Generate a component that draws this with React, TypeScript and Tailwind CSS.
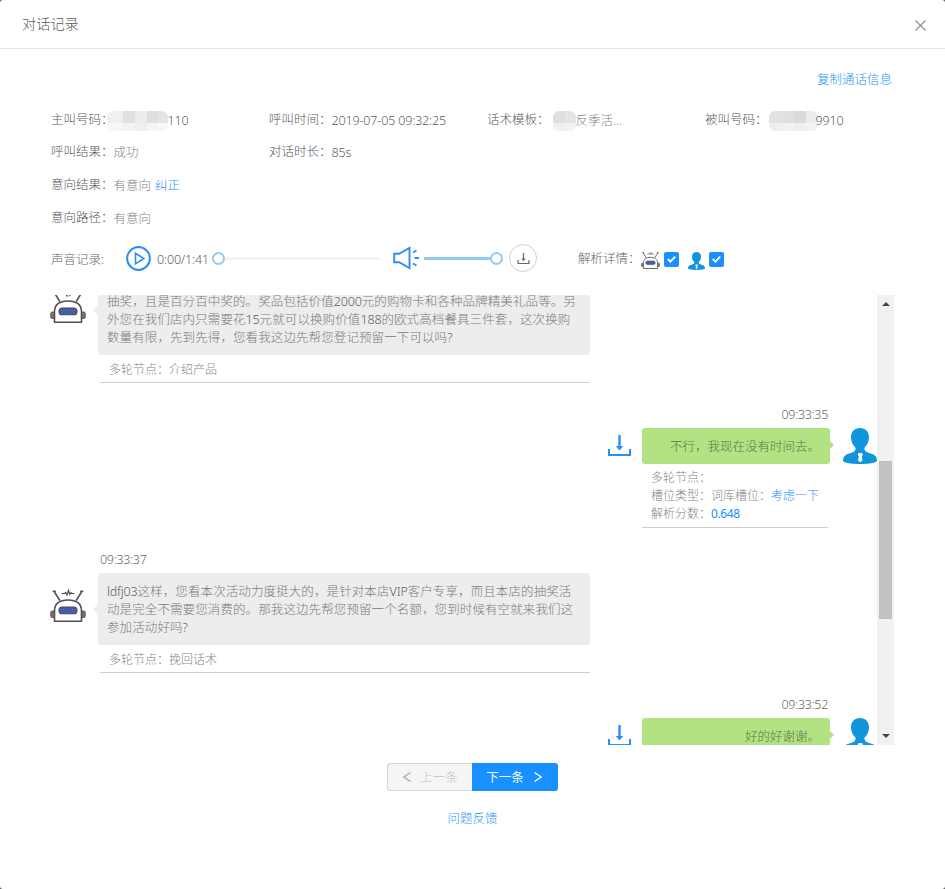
import type { ReactNode } from "react";

interface Reply { lines: string[]; node: string; time?: string; }

const intro: Reply = {
  lines: [
    "",
    "抽奖，且是百分百中奖的。奖品包括价值2000元的购物卡和各种品牌精美礼品等。另",
    "外您在我们店内只需要花15元就可以换购价值188的欧式高档餐具三件套，这次换购",
    "数量有限，先到先得，您看我这边先帮您登记预留一下可以吗?",
  ],
  node: "介绍产品",
};

const retain: Reply = {
  time: "09:33:37",
  lines: [
    "ldfj03这样，您看本次活动力度挺大的，是针对本店VIP客户专享，而且本店的抽奖活",
    "动是完全不需要您消费的。那我这边先帮您预留一个名额，您到时候有空就来我们这",
    "参加活动好吗?",
  ],
  node: "挽回话术",
};

// Latin runs are set slightly tighter and darker than the Chinese around them
function Mixed({ children }: { children: string }) {
  return (
    <>
      {children.split(/([\x20-\x7e]+)/).map((part, i) => (
        <span key={i} className={i % 2 ? "tracking-[-0.15px] text-[#5c5c5c]" : undefined}>{part}</span>
      ))}
    </>
  );
}

function Robot({ className }: { className?: string }) {
  return (
    <svg viewBox="0 0 36 36" className={className} fill="none">
      <path d="M4.500 4 9.500 12M31.500 4 26.500 12" stroke="#50505c" strokeWidth="1.600" strokeLinecap="round" />
      <path d="M3.200 3.200h2M30.800 3.200h2" stroke="#50505c" strokeWidth="1.600" strokeLinecap="round" />
      <path d="M11.500 5.500h3l1.200-1 1.300 2.500 1.500-4.500 1.300 4L21 4.700l1 .8h2.500" stroke="#50505c" strokeWidth="1.200" />
      <rect x=".8" y="23" width="4" height="6.500" rx="1.500" fill="#8d6a70" stroke="#50505c" />
      <rect x="31.200" y="23" width="4" height="6.500" rx="1.500" fill="#8d6a70" stroke="#50505c" />
      <path d="M4.500 33.200V23C4.500 15.500 10 12 18 12s13.500 3.500 13.500 11v10.200z" fill="#fff" stroke="#50505c" strokeWidth="1.600" strokeLinejoin="round" />
      <rect x="9" y="19" width="18" height="6.800" rx="3.400" fill="#4560a8" stroke="#45455a" strokeWidth="1.100" />
    </svg>
  );
}

function Person({ className }: { className?: string }) {
  return (
    <svg viewBox="0 0 34 36" className={className}>
      <path d="M17 0c5.600 0 9 3.800 9 9.300 0 4.200-1.700 8-4.400 10.200-.6 2.600.5 4 3.100 4.900l5.300 1.900c2.600 1 4 3.300 4 6.200 0 2-7 3.500-17 3.500S0 34.500 0 32.500c0-2.900 1.400-5.200 4-6.200l5.300-1.900c2.600-.9 3.700-2.300 3.100-4.900C9.700 17.300 8 13.500 8 9.300 8 3.800 11.400 0 17 0z" fill="#1296db" />
      <path d="M15.500 25h3.500l.9 1.800-1.200 1.800.8 3.800-2.200 1.800-2.200-1.800.8-3.800-1.200-1.800z" fill="#fff" />
    </svg>
  );
}

function SaveIcon() {
  return (
    <svg viewBox="0 0 23 21" className="h-[21px] w-[23px]" fill="none" stroke="#2b8ff2">
      <path d="M1 14v6h21v-6" strokeWidth="2" />
      <path d="M11.500 0v13" strokeWidth="2.400" />
      <path d="M7.800 11h7.400L11.500 15.500z" fill="#2b8ff2" stroke="none" />
    </svg>
  );
}

function Checked() {
  return (
    <span className="flex size-[15px] items-center justify-center rounded-[2px] bg-[#1890ff]">
      <svg viewBox="0 0 15 15" className="size-[15px]" fill="none" stroke="#fff" strokeWidth="2">
        <path d="M3.800 7 6.400 9.600 11.200 4.600" />
      </svg>
    </span>
  );
}

// Mosaic over the private part of a number; each cell fades towards its foot
function Mask({ className, children }: { className: string; children: ReactNode }) {
  return <span className={`flex h-5 overflow-hidden rounded-md ${className}`}>{children}</span>;
}

function Field({ label, children }: { label: string; children: ReactNode }) {
  return (
    <div className="flex h-[33px] w-[218px] items-center whitespace-nowrap">
      <span className="w-[62.5px] shrink-0 text-[#595959]">{label}：</span>
      <span className="flex items-center pt-[2px]">{children}</span>
    </div>
  );
}

function Time({ children }: { children: string }) {
  return <span className="tracking-[-0.3px] text-[#666]">{children}</span>;
}

function BotMessage({ reply }: { reply: Reply }) {
  return (
    <div className="mb-[22px]">
      {reply.time && <p className="mb-[5px] ml-[50px] h-[18px] pt-px"><Time>{reply.time}</Time></p>}
      <div className="flex items-center">
        <Robot className="mr-3 mb-[6px] size-9" />
        <div className="relative w-[492px] rounded-[3px] bg-[#ededed] pt-[10px] pb-[8px] pl-[9px] tracking-[0.1px] whitespace-nowrap text-[#7a7a7a]">
          <i className="absolute top-1/2 -left-[5px] -mt-[5px] border-y-[5px] border-r-[5px] border-y-transparent border-r-[#ededed]" />
          {reply.lines.map((line) => <p key={line} className="h-[18px]"><Mixed>{line}</Mixed></p>)}
        </div>
      </div>
      <p className="ml-[50px] h-[28px] w-[490px] border-b border-[#cfcfcf] pt-[6px] pl-[9px] text-[12px]">多轮节点：{reply.node}</p>
    </div>
  );
}

function CustomerMessage({ time, text, children }: { time: string; text: string; children?: ReactNode }) {
  return (
    <div className="mb-[22px] flex flex-col items-end">
      <p className="mr-[49px] h-[18px] pt-px"><Time>{time}</Time></p>
      <div className="mt-[5px] flex">
        <div className="mr-[11px] pt-[7px]"><SaveIcon /></div>
        <div className="relative mr-[13px] h-9 w-[188px] rounded-[3px] bg-[#b2e281] pt-[10px] pr-[10px] text-right whitespace-nowrap text-[#5f7549]">
          <i className="absolute top-[13px] -right-[4px] border-y-[4px] border-l-[4px] border-y-transparent border-l-[#b2e281]" />
          {text}
        </div>
        <Person className="h-9 w-[34px]" />
      </div>
      {children}
    </div>
  );
}

export default function App() {
  return (
    <div className="bg-[#595959]">
      <main className="flex h-[889px] w-[945px] flex-col overflow-hidden rounded-[3px] bg-white text-[12.5px] leading-[18px] font-light text-[#858585] [font-family:'Noto_Sans','Noto_Sans_CJK_SC',sans-serif]">
        <header className="flex h-[49px] shrink-0 items-center justify-between border-b border-[#e3e3e3] pr-[19px] pl-[22px]">
          <h1 className="text-[14.2px] text-[#5a5a5a]">对话记录</h1>
          <svg viewBox="0 0 11 11" className="mt-[3px] size-[11px]" stroke="#8a8a8a" strokeWidth="1.100">
            <path d="M.5.5l10 10M10.500.5l-10 10" />
          </svg>
        </header>

        <div className="flex h-[54px] shrink-0 justify-end pt-[22px] pr-[53px] text-[#2b93f5]">复制通话信息</div>

        <section className="h-[131px] shrink-0 pl-[51px]">
          <div className="-mb-px flex">
            <Field label="主叫号码">
              <Mask className="-ml-[7px] w-[61px]">
                <i className="w-4 bg-linear-to-b from-[#f0f0f0] from-60% to-[#f7f7f7] to-60%" />
                <i className="w-3 bg-linear-to-b from-[#e0e0e0] from-60% to-[#f3f3f3] to-60%" />
                <i className="w-3 bg-linear-to-b from-[#ececec] from-60% to-[#f0f0f0] to-60%" />
                <i className="w-[11px] bg-linear-to-b from-[#dfdfdf] from-60% to-[#f5f5f5] to-60%" />
                <i className="flex-1 bg-linear-to-b from-[#e5e5e5] from-60% to-[#f7f7f7] to-60%" />
              </Mask>
              <Mixed>110</Mixed>
            </Field>
            <Field label="呼叫时间"><Mixed>2019-07-05 09:32:25</Mixed></Field>
            <Field label="话术模板">
              <Mask className="ml-[3px] w-[23px]">
                <i className="w-3 bg-linear-to-b from-[#dfdfdf] from-60% to-[#f0f0f0] to-60%" />
                <i className="flex-1 bg-linear-to-b from-[#e5e5e5] from-60% to-[#f2f2f2] to-60%" />
              </Mask>
              反季活...
            </Field>
            <Field label="被叫号码">
              <Mask className="ml-px w-[49px]">
                <i className="w-[13px] bg-linear-to-b from-[#e2e2e2] from-60% to-[#efefef] to-60%" />
                <i className="w-3 bg-linear-to-b from-[#e0e0e0] from-60% to-[#f2f2f2] to-60%" />
                <i className="w-3 bg-linear-to-b from-[#dadada] from-60% to-[#efefef] to-60%" />
                <i className="flex-1 bg-linear-to-b from-[#ececec] from-60% to-[#f2f2f2] to-60%" />
              </Mask>
              <span className="-ml-[2px]"><Mixed>9910</Mixed></span>
            </Field>
          </div>
          <div className="flex">
            <Field label="呼叫结果">成功</Field>
            <Field label="对话时长"><Mixed>85s</Mixed></Field>
          </div>
          <Field label="意向结果">有意向<span className="ml-1 text-[#2b93f5]">纠正</span></Field>
          <Field label="意向路径">有意向</Field>
        </section>

        <section className="flex h-[48px] shrink-0 items-center pl-[51px] whitespace-nowrap">
          <span className="w-[75px] pt-[3px] text-[#666]">声音记录:</span>
          <svg viewBox="0 0 25 25" className="size-[25px]" fill="none" stroke="#2b8ff2">
            <circle cx="12.500" cy="12.500" r="11.400" strokeWidth="2" />
            <path d="M9.500 7.200v10.600l8.300-5.300z" strokeWidth="1.600" />
          </svg>
          <span className="ml-[6px] w-[55px] pt-[3px]"><Mixed>0:00/1:41</Mixed></span>
          <span className="size-[13px] rounded-full border-2 border-[#91caf5] bg-white" />
          <span className="h-[3px] w-[156px] bg-[#f4f4f4]" />
          <svg viewBox="0 0 27 24" className="ml-[12px] h-6 w-[27px]" fill="none" stroke="#2b8ff2" strokeWidth="1.900">
            <path d="M1.200 7.800h5L16.500 2v20L6.200 16.200h-5z" />
            <path d="M20 6.500l3.500-2M21.500 12H26M20 17.500l3.500 2" />
          </svg>
          <span className="ml-[4px] h-[3px] w-[66px] bg-[#91caf5]" />
          <span className="size-[13px] rounded-full border-2 border-[#91caf5] bg-white" />
          <span className="ml-[6px] flex size-7 items-center justify-center rounded-full border border-[#d0d0d0]">
            <svg viewBox="0 0 13 13" className="size-[13px]" fill="none" stroke="#666">
              <path d="M1 8v3.500h11V8M6.500 1v7" strokeWidth="1.200" />
              <path d="M4.300 6.500h4.400L6.500 9.200z" fill="#666" stroke="none" />
            </svg>
          </span>
          <div className="ml-[41px] flex items-center pt-[2px]">
            <span className="w-[63px] text-[#666]">解析详情：</span>
            <Robot className="mt-[3px] size-[19px]" />
            <span className="ml-[4px]"><Checked /></span>
            <Person className="mt-[3px] ml-[9px] h-[18px] w-[17px]" />
            <span className="ml-[4px]"><Checked /></span>
          </div>
        </section>

        <section className="mt-[13px] ml-[50px] flex h-[450px] w-[844px] shrink-0 overflow-hidden">
          <div className="w-[827px] shrink-0">
            <div className="-mt-[30px]">
              <BotMessage reply={intro} />
              <CustomerMessage time="09:33:35" text="不行，我现在没有时间去。">
                <div className="mr-[49px] h-[64px] w-[186px] border-b border-[#cfcfcf] pt-[5px] pl-[9px] text-[12px]">
                  <p>多轮节点：</p>
                  <p>槽位类型：词库槽位：<span className="text-[#1890ff]">考虑一下</span></p>
                  <p>解析分数：<span className="font-normal tracking-[-0.4px] text-[#1890ff]">0.648</span></p>
                </div>
              </CustomerMessage>
              <BotMessage reply={retain} />
              <CustomerMessage time="09:33:52" text="好的好谢谢。" />
            </div>
          </div>
          <div className="flex w-[17px] flex-col items-center bg-[#f1f1f1]">
            <i className="mt-[7px] border-x-4 border-b-4 border-x-transparent border-b-[#444]" />
            <i className="mt-[155px] h-[158px] w-[13px] bg-[#c1c1c1]" />
            <i className="mt-[115px] border-x-4 border-t-4 border-x-transparent border-t-[#444]" />
          </div>
        </section>

        <div className="mt-[18px] flex h-7 shrink-0 justify-center">
          <button className="flex w-[85px] items-center justify-center gap-[9px] rounded-l-[3px] border border-r-0 border-[#d3d3d3] bg-[#f5f5f5] pl-px text-[#c4c4c4]">
            <svg viewBox="0 0 8 10" className="h-[10px] w-2" fill="none" stroke="#aaa" strokeWidth="1.300"><path d="M7.500.5.8 5l6.700 4.500" /></svg>
            <span className="pt-[2px]">上一条</span>
          </button>
          <button className="flex w-[86px] items-center justify-center gap-[10px] rounded-r-[3px] bg-[#1890ff] pr-[2px] font-normal text-white">
            <span className="pt-[2px]">下一条</span>
            <svg viewBox="0 0 8 10" className="h-[10px] w-2" fill="none" stroke="#fff" strokeWidth="1.300"><path d="M.5.5 7.200 5 .5 9.500" /></svg>
          </button>
        </div>
        <p className="mt-[19px] text-center text-[#2b93f5]">问题反馈</p>
      </main>
    </div>
  );
}
